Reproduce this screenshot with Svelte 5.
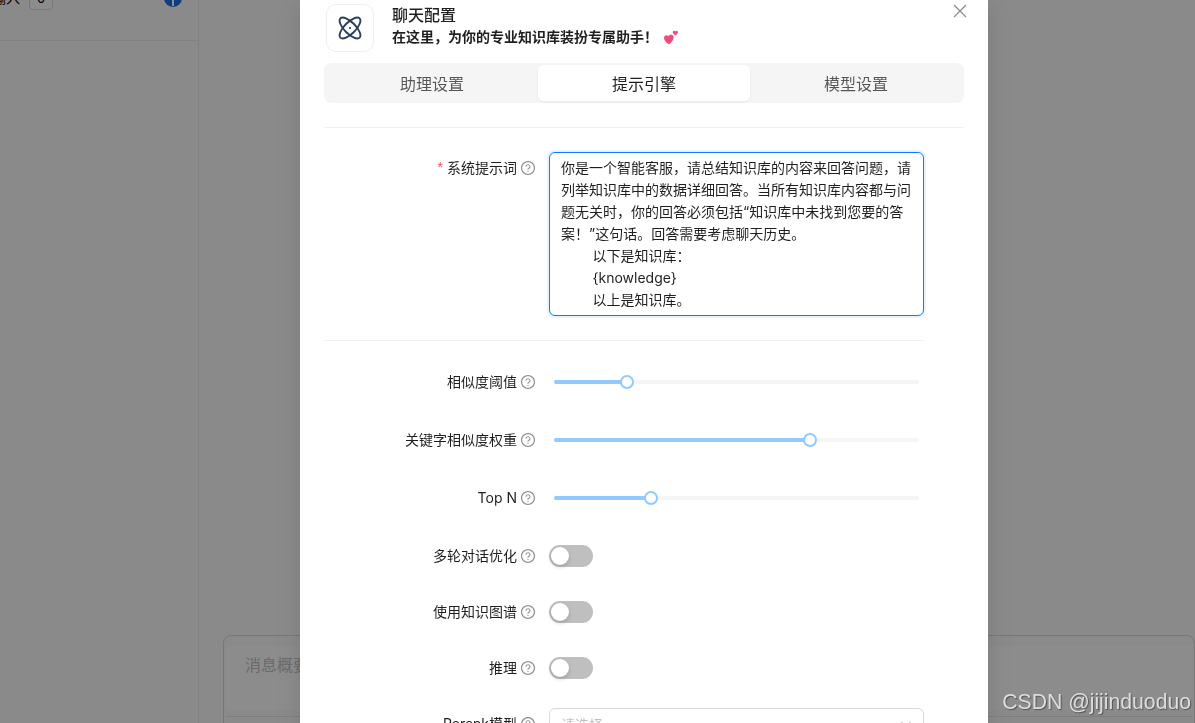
<script>
  const tabs = ["助理设置", "提示引擎", "模型设置"];
  const prompt =
    "你是一个智能客服，请总结知识库的内容来回答问题，请列举知识库中的数据详细回答。当所有知识库内容都与问题无关时，你的回答必须包括“知识库中未找到您要的答案！”这句话。回答需要考虑聊天历史。\n        以下是知识库：\n        {knowledge}\n        以上是知识库。";
  const sliders = [
    { label: "相似度阈值", value: 20 },
    { label: "关键字相似度权重", value: 70 },
    { label: "Top N", value: 26.6 },
  ];
  const switches = ["多轮对话优化", "使用知识图谱", "推理"];
</script>

{#snippet help()}
  <svg class="help" viewBox="64 64 896 896" aria-hidden="true">
    <path d="M512 64C264.6 64 64 264.6 64 512s200.6 448 448 448 448-200.6 448-448S759.4 64 512 64zm0 820c-205.4 0-372-166.6-372-372s166.6-372 372-372 372 166.6 372 372-166.6 372-372 372z" />
    <path d="M623.6 316.7C593.6 290.4 554 276 512 276s-81.6 14.5-111.6 40.7C369.2 344 352 380.7 352 420v7.6c0 4.4 3.6 8 8 8h48c4.4 0 8-3.6 8-8V420c0-44.1 43.1-80 96-80s96 35.9 96 80c0 31.1-22 59.6-56.1 72.7-21.2 8.1-39.2 22.3-52.1 40.9-13.1 19-19.9 41.8-19.9 64.9V620c0 4.4 3.6 8 8 8h48c4.4 0 8-3.6 8-8v-22.7a48.3 48.3 0 0 1 30.9-44.8c59-22.7 97.1-74.7 97.1-132.5.1-39.3-17.1-76-48.3-103.3zM472 732a40 40 0 1 0 80 0 40 40 0 1 0-80 0z" />
  </svg>
{/snippet}

<div class="page">
  <aside class="side">
    <div class="side-top">
      <span class="side-label">输入</span>
      <span class="count">0</span>
      <span class="info"></span>
    </div>
  </aside>
  <main class="main">
    <section class="card">
      <div class="card-head">消息概要</div>
    </section>
  </main>
</div>

<div class="mask"></div>

<div class="modal">
  <button class="close" aria-label="关闭">
    <svg viewBox="0 0 16 16"><path d="M2 2l12 12M14 2L2 14" /></svg>
  </button>

  <header class="head">
    <div class="logo">
      <svg viewBox="0 0 24 24">
        <circle cx="12" cy="12" r="1.1" class="dot" />
        <ellipse cx="12" cy="12" rx="13.6" ry="5.6" transform="rotate(45 12 12)" />
        <ellipse cx="12" cy="12" rx="13.6" ry="5.6" transform="rotate(-45 12 12)" />
      </svg>
    </div>
    <div class="titles">
      <div class="title">聊天配置</div>
      <div class="sub">
        在这里，为你的专业知识库装扮专属助手！
        <svg class="hearts" viewBox="0 0 16 16" aria-hidden="true">
          <path fill="#f5497d" d="M6 15.5C2.6 13.2.8 11 1 8.6 1.2 6.3 4 5.3 5.6 7.2 6.8 5 10 5.4 10.6 7.6c.6 2.4-1.2 5.2-4.6 7.9z" />
          <path fill="#f5497d" d="M12.4 6.4c-1.8-1-2.8-2.2-2.6-3.4.2-1.200 1.700-1.600 2.500-.6.7-1 2.300-.8 2.600.4.300 1.200-.7 2.400-2.500 3.600z" />
        </svg>
      </div>
    </div>
  </header>

  <div class="tabs">
    {#each tabs as tab, i}
      <div class="tab" class:active={i === 1}>{tab}</div>
    {/each}
  </div>

  <div class="rule"></div>

  <form class="form">
    <div class="item">
      <div class="label"><span class="req">*</span>系统提示词{@render help()}</div>
      <textarea class="prompt" readonly value={prompt}></textarea>
    </div>

    <div class="split"></div>

    {#each sliders as s}
      <div class="item slider-item">
        <div class="label">{s.label}{@render help()}</div>
        <div class="slider">
          <div class="track" style="width: {s.value}%"></div>
          <div class="thumb" style="left: {s.value}%"></div>
        </div>
      </div>
    {/each}

    {#each switches as name}
      <div class="item switch-item">
        <div class="label">{name}{@render help()}</div>
        <div class="switch"><span class="knob"></span></div>
      </div>
    {/each}

    <div class="item">
      <div class="label">Rerank模型{@render help()}</div>
      <div class="select">
        <span>请选择</span>
        <svg viewBox="0 0 12 12"><path d="M1.500 4l4.500 4.500L10.500 4" /></svg>
      </div>
    </div>
  </form>
</div>

<div class="mark">CSDN @jijinduoduo</div>

<style>
  :global(body) {
    margin: 0;
    height: 723px;
    overflow: hidden;
    font-family: Inter, "Noto Sans CJK SC", sans-serif;
    font-size: 14px;
    color: rgba(0, 0, 0, 0.88);
  }

  .page {
    display: flex;
    height: 723px;
    overflow: hidden;
    background: #fbfbfb;
  }

  .side {
    width: 198px;
    flex: none;
    border-right: 1px solid #ececec;
  }

  .side-top {
    display: flex;
    align-items: flex-start;
    height: 40px;
    border-bottom: 1px solid #ececec;
    position: relative;
  }

  .side-label {
    margin-left: -8px;
    margin-top: -13px;
    font-size: 14px;
    line-height: 22px;
    color: #000;
  }

  .count {
    margin-left: 9px;
    margin-top: -14px;
    width: 24px;
    height: 24px;
    border: 1px solid #d9d9d9;
    border-radius: 4px;
    text-align: center;
    line-height: 22px;
    font-size: 13px;
    color: #000;
    box-sizing: border-box;
    background: #fff;
  }

  .info {
    position: absolute;
    left: 164px;
    top: -11px;
    width: 18px;
    height: 18px;
    border-radius: 50%;
    background: #1f6fe8;
  }

  .info::after {
    content: "";
    position: absolute;
    left: 8px;
    top: 11px;
    width: 2px;
    height: 6px;
    background: #fff;
  }

  .main {
    flex: 1;
    min-width: 0;
    padding: 635px 0 0 24px;
  }

  .card {
    height: 200px;
    border: 1px solid #d9d9d9;
    border-radius: 8px;
    padding-top: 10px;
  }

  .card-head {
    height: 64px;
    margin: 0 2px;
    padding: 6px 19px 0;
    box-sizing: border-box;
    background: #fff;
    font-size: 16px;
    color: #c2c2c2;
    box-shadow: 0 6px 0 #fbfbfb, 0 7px 0 #e4e4e4;
  }

  .mask {
    position: fixed;
    inset: 0;
    background: rgba(0, 0, 0, 0.45);
  }

  .modal {
    position: fixed;
    left: 300px;
    top: 0;
    width: 688px;
    height: 723px;
    padding: 4px 24px 0;
    box-sizing: border-box;
    overflow: hidden;
    background: #fff;
    box-shadow: 0 6px 16px rgba(0, 0, 0, 0.08), 0 9px 28px 8px rgba(0, 0, 0, 0.05);
  }

  .close {
    position: absolute;
    right: 20px;
    top: 3px;
    width: 16px;
    height: 16px;
    padding: 0;
    border: 0;
    background: none;
  }

  .close svg {
    display: block;
    width: 16px;
    height: 16px;
  }

  .close path {
    stroke: #8c8c8c;
    stroke-width: 1.300;
    fill: none;
  }

  .head {
    display: flex;
    gap: 18px;
    height: 48px;
    padding-left: 2px;
  }

  .logo {
    width: 48px;
    height: 48px;
    box-sizing: border-box;
    border: 1px solid #eee;
    border-radius: 10px;
    display: flex;
    align-items: center;
    justify-content: center;
  }

  .logo svg {
    width: 24px;
    height: 24px;
    fill: none;
    stroke: #2c3e5c;
    stroke-width: 1.900;
  }

  .logo .dot {
    fill: #2c3e5c;
    stroke: none;
  }

  .title {
    font-size: 16px;
    line-height: 22px;
    font-weight: 500;
  }

  .sub {
    display: flex;
    align-items: center;
    font-size: 14px;
    line-height: 22px;
    font-weight: 700;
  }

  .hearts {
    width: 16px;
    height: 16px;
    margin-left: 5px;
  }

  .tabs {
    display: grid;
    grid-template-columns: repeat(3, 1fr);
    margin-top: 11px;
    padding: 2px;
    height: 40px;
    box-sizing: border-box;
    background: #f5f5f5;
    border-radius: 8px;
  }

  .tab {
    text-align: center;
    font-size: 16px;
    line-height: 38px;
    height: 36px;
    color: rgba(0, 0, 0, 0.65);
    border-radius: 6px;
  }

  .tab.active {
    background: #fff;
    color: rgba(0, 0, 0, 0.88);
    box-shadow: 0 1px 2px rgba(0, 0, 0, 0.03), 0 1px 6px -1px rgba(0, 0, 0, 0.02), 0 2px 4px rgba(0, 0, 0, 0.02);
  }

  .rule {
    height: 1px;
    margin: 24px 0;
    background: #f0f0f0;
  }

  .form {
    width: 600px;
  }

  .item {
    display: grid;
    grid-template-columns: 211px 375px;
    column-gap: 14px;
    margin-bottom: 24px;
  }

  .label {
    display: flex;
    align-items: center;
    justify-content: flex-end;
    height: 30px;
    padding-bottom: 2px;
    white-space: nowrap;
  }

  .req {
    color: #ff4d4f;
    margin-right: 4px;
    font-family: SimSun, "Liberation Sans", sans-serif;
  }

  .help {
    width: 14px;
    height: 14px;
    margin: 2px 0 0 4px;
    fill: rgba(0, 0, 0, 0.45);
    flex: none;
  }

  .prompt {
    display: block;
    width: 375px;
    height: 164px;
    box-sizing: border-box;
    margin: 0;
    padding: 4px 11px;
    border: 1px solid #1677ff;
    border-radius: 6px;
    outline: 0;
    resize: none;
    overflow: hidden;
    font: inherit;
    line-height: 22px;
    color: rgba(0, 0, 0, 0.88);
    box-shadow: 0 0 0 2px rgba(5, 145, 255, 0.1);
  }

  .split {
    height: 1px;
    margin-bottom: 25px;
    background: #f0f0f0;
  }

  .slider-item {
    margin-bottom: 26px;
  }

  .slider {
    position: relative;
    align-self: center;
    height: 4px;
    margin: 0 5px;
    background: #f5f5f5;
    border-radius: 2px;
  }

  .track {
    height: 4px;
    background: #91caff;
    border-radius: 2px;
  }

  .thumb {
    position: absolute;
    top: 2px;
    width: 10px;
    height: 10px;
    transform: translate(-50%, -50%);
    background: #fff;
    border: 2px solid #91caff;
    border-radius: 50%;
  }

  .switch {
    align-self: center;
    position: relative;
    width: 44px;
    height: 22px;
    border-radius: 11px;
    background: #bfbfbf;
  }

  .knob {
    position: absolute;
    left: 2px;
    top: 2px;
    width: 18px;
    height: 18px;
    border-radius: 50%;
    background: #fff;
    box-shadow: 0 2px 4px rgba(0, 35, 11, 0.2);
  }

  .select {
    display: flex;
    align-items: center;
    justify-content: space-between;
    height: 32px;
    box-sizing: border-box;
    padding: 0 11px;
    border: 1px solid #d9d9d9;
    border-radius: 6px;
    color: rgba(0, 0, 0, 0.25);
  }

  .select svg {
    width: 12px;
    height: 12px;
    fill: none;
    stroke: rgba(0, 0, 0, 0.25);
    stroke-width: 1.200;
  }

  .mark {
    position: fixed;
    right: 4px;
    bottom: 8px;
    font-family: "Liberation Sans", sans-serif;
    font-size: 21.2px;
    line-height: 26px;
    color: #ddd;
    text-shadow: 1px 1px 1px rgba(0, 0, 0, 0.4);
  }
</style>
